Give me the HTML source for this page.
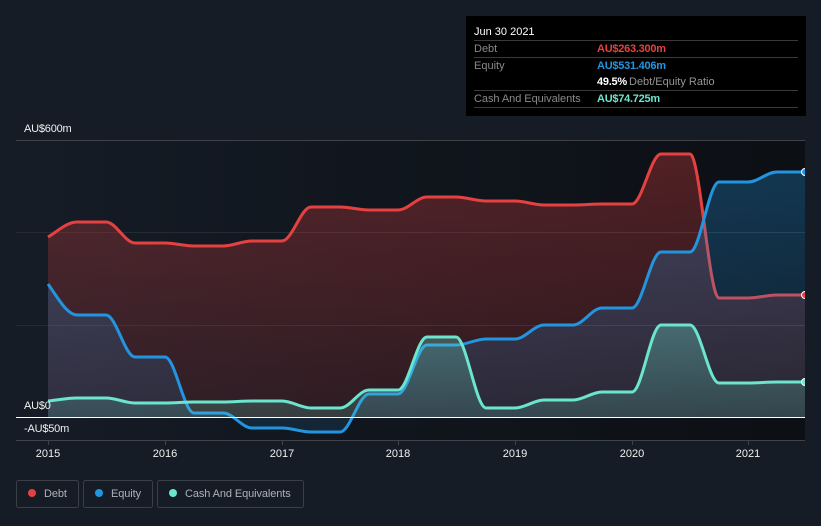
<!DOCTYPE html>
<html>
<head>
<meta charset="utf-8">
<style>
html,body{margin:0;padding:0;background:#151c26;}
body{width:821px;height:526px;overflow:hidden;position:relative;font-family:"Liberation Sans",sans-serif;}
svg{position:absolute;left:0;top:0;}
text{font-family:"Liberation Sans",sans-serif;font-size:11px;}
</style>
</head>
<body>
<svg width="821" height="526" viewBox="0 0 821 526" xmlns="http://www.w3.org/2000/svg">
<defs>
<linearGradient id="bg" x1="16" x2="805" y1="0" y2="0" gradientUnits="userSpaceOnUse"><stop offset="0" stop-color="#151c26"/><stop offset="1" stop-color="#0c0f14"/></linearGradient>
<linearGradient id="fr" x1="0" x2="0" y1="140" y2="417" gradientUnits="userSpaceOnUse"><stop offset="0" stop-color="#e64141" stop-opacity=".32"/><stop offset="1" stop-color="#e64141" stop-opacity=".13"/></linearGradient>
<linearGradient id="fb" x1="0" x2="0" y1="140" y2="417" gradientUnits="userSpaceOnUse"><stop offset="0" stop-color="#2394df" stop-opacity=".32"/><stop offset="1" stop-color="#2394df" stop-opacity=".12"/></linearGradient>
<linearGradient id="ft" x1="0" x2="0" y1="325" y2="417" gradientUnits="userSpaceOnUse"><stop offset="0" stop-color="#6ce5cf" stop-opacity=".32"/><stop offset="1" stop-color="#6ce5cf" stop-opacity=".16"/></linearGradient>
<clipPath id="c"><rect x="16" y="120" width="789" height="330"/></clipPath>
</defs>
<rect x="16" y="140" width="789" height="300" fill="url(#bg)"/>
<path d="M16 140.5H805" stroke="#3f4349" stroke-width="1"/>
<path d="M16 232.5H805M16 325.5H805" stroke="#262a31" stroke-width="1"/>
<path d="M16 440.5H805" stroke="#3f4349" stroke-width="1"/>
<path d="M48.5 440V445M165.5 440V445M282.5 440V445M398.5 440V445M515.5 440V445M632.5 440V445M748.5 440V445" stroke="#3f4349" stroke-width="1"/>

<g clip-path="url(#c)">
<path fill="url(#fr)" d="M48 237C58 231 67 222 77 222H106C116 222 125 243 135 243H165C175 243 184 246 194 246H223C233 246 242 241 252 241H282C292 241 301 207 311 207H340C350 207 359 210 369 210H398C408 210 417 197 427 197H456C466 197 476 201 486 201H515C525 201 534 205 544 205H573C583 205 592 204 602 204H632C642 204 651 154 661 154H690C700 154 709 298 719 298H748C758 298 767 295 777 295H805V417H48Z"/>
<path fill="none" stroke="#e64141" stroke-width="3" d="M48 237C58 231 67 222 77 222H106C116 222 125 243 135 243H165C175 243 184 246 194 246H223C233 246 242 241 252 241H282C292 241 301 207 311 207H340C350 207 359 210 369 210H398C408 210 417 197 427 197H456C466 197 476 201 486 201H515C525 201 534 205 544 205H573C583 205 592 204 602 204H632C642 204 651 154 661 154H690C700 154 709 298 719 298H748C758 298 767 295 777 295H805"/>

<path fill="url(#fb)" d="M48 284C58 298 67 315 77 315H106C116 315 125 357 135 357H165C175 357 184 413 194 413H223C233 413 242 428 252 428H282C292 428 301 432 311 432H340C350 432 359 394 369 394H398C408 394 417 345 427 345H456C466 345 476 339 486 339H515C525 339 534 325 544 325H573C583 325 592 308 602 308H632C642 308 651 252 661 252H690C700 252 709 182 719 182H748C758 182 767 172 777 172H805V417H48Z"/>
<path fill="none" stroke="#2394df" stroke-width="3" d="M48 284C58 298 67 315 77 315H106C116 315 125 357 135 357H165C175 357 184 413 194 413H223C233 413 242 428 252 428H282C292 428 301 432 311 432H340C350 432 359 394 369 394H398C408 394 417 345 427 345H456C466 345 476 339 486 339H515C525 339 534 325 544 325H573C583 325 592 308 602 308H632C642 308 651 252 661 252H690C700 252 709 182 719 182H748C758 182 767 172 777 172H805"/>

<path fill="url(#ft)" d="M48 401C58 400 67 398 77 398H106C116 398 125 403 135 403H165C175 403 184 402 194 402H223C233 402 242 401 252 401H282C292 401 301 408 311 408H340C350 408 359 390 369 390H398C408 390 417 337 427 337H456C466 337 476 408 486 408H515C525 408 534 400 544 400H573C583 400 592 392 602 392H632C642 392 651 325 661 325H690C700 325 709 383 719 383H748C758 383 767 382 777 382H805V417H48Z"/>
<path fill="none" stroke="#6ce5cf" stroke-width="3" d="M48 401C58 400 67 398 77 398H106C116 398 125 403 135 403H165C175 403 184 402 194 402H223C233 402 242 401 252 401H282C292 401 301 408 311 408H340C350 408 359 390 369 390H398C408 390 417 337 427 337H456C466 337 476 408 486 408H515C525 408 534 400 544 400H573C583 400 592 392 602 392H632C642 392 651 325 661 325H690C700 325 709 383 719 383H748C758 383 767 382 777 382H805"/>

<circle cx="805" cy="172" r="3.5" fill="#2394df" stroke="#fff" stroke-width="1"/>
<circle cx="805" cy="295" r="3.5" fill="#e64141" stroke="#fff" stroke-width="1"/>
<circle cx="805" cy="382" r="3.5" fill="#6ce5cf" stroke="#fff" stroke-width="1"/>
</g>
<path d="M16 417.5H805" stroke="#fff" stroke-width="1"/>

<g fill="#f0f0f0" letter-spacing="-.2">
<text x="24" y="132">AU$600m</text>
<text x="24" y="409">AU$0</text>
<text x="24" y="432">-AU$50m</text>
</g>
<g fill="#f0f0f0">
<text x="48" y="457" text-anchor="middle">2015</text>
<text x="165" y="457" text-anchor="middle">2016</text>
<text x="282" y="457" text-anchor="middle">2017</text>
<text x="398" y="457" text-anchor="middle">2018</text>
<text x="515" y="457" text-anchor="middle">2019</text>
<text x="632" y="457" text-anchor="middle">2020</text>
<text x="748" y="457" text-anchor="middle">2021</text>
</g>

<rect x="466" y="16" width="340" height="100" fill="#000"/>
<path d="M474 40.5H798M474 57.5H798M474 90.5H798M474 107.5H798" stroke="#3a3a3a" stroke-width="1"/>
<text x="474" y="35" fill="#fff">Jun 30 2021</text>
<text x="474" y="52" fill="#8a8a8a">Debt</text>
<text x="597" y="52" fill="#e64141" font-weight="700" letter-spacing="-.25">AU$263.300m</text>
<text x="474" y="69" fill="#8a8a8a">Equity</text>
<text x="597" y="69" fill="#2394df" font-weight="700" letter-spacing="-.25">AU$531.406m</text>
<text x="597" y="85" fill="#fff" font-weight="700" letter-spacing="-.25">49.5%</text>
<text x="629" y="85" fill="#959595">Debt/Equity Ratio</text>
<text x="474" y="102" fill="#8a8a8a" letter-spacing="-.05">Cash And Equivalents</text>
<text x="597" y="102" fill="#6ce5cf" font-weight="700" letter-spacing="-.25">AU$74.725m</text>

<g fill="none" stroke="#3a3f47" stroke-width="1">
<rect x="16.5" y="480.5" width="62" height="27" rx="2"/>
<rect x="83.5" y="480.5" width="69" height="27" rx="2"/>
<rect x="157.5" y="480.5" width="146" height="27" rx="2"/>
</g>
<circle cx="32" cy="493" r="4" fill="#e64141"/>
<circle cx="99" cy="493" r="4" fill="#2394df"/>
<circle cx="173" cy="493" r="4" fill="#6ce5cf"/>
<g fill="#aeb2b8" letter-spacing="-.1">
<text x="44" y="497">Debt</text>
<text x="111" y="497">Equity</text>
<text x="185" y="497">Cash And Equivalents</text>
</g>
</svg>
</body>
</html>
